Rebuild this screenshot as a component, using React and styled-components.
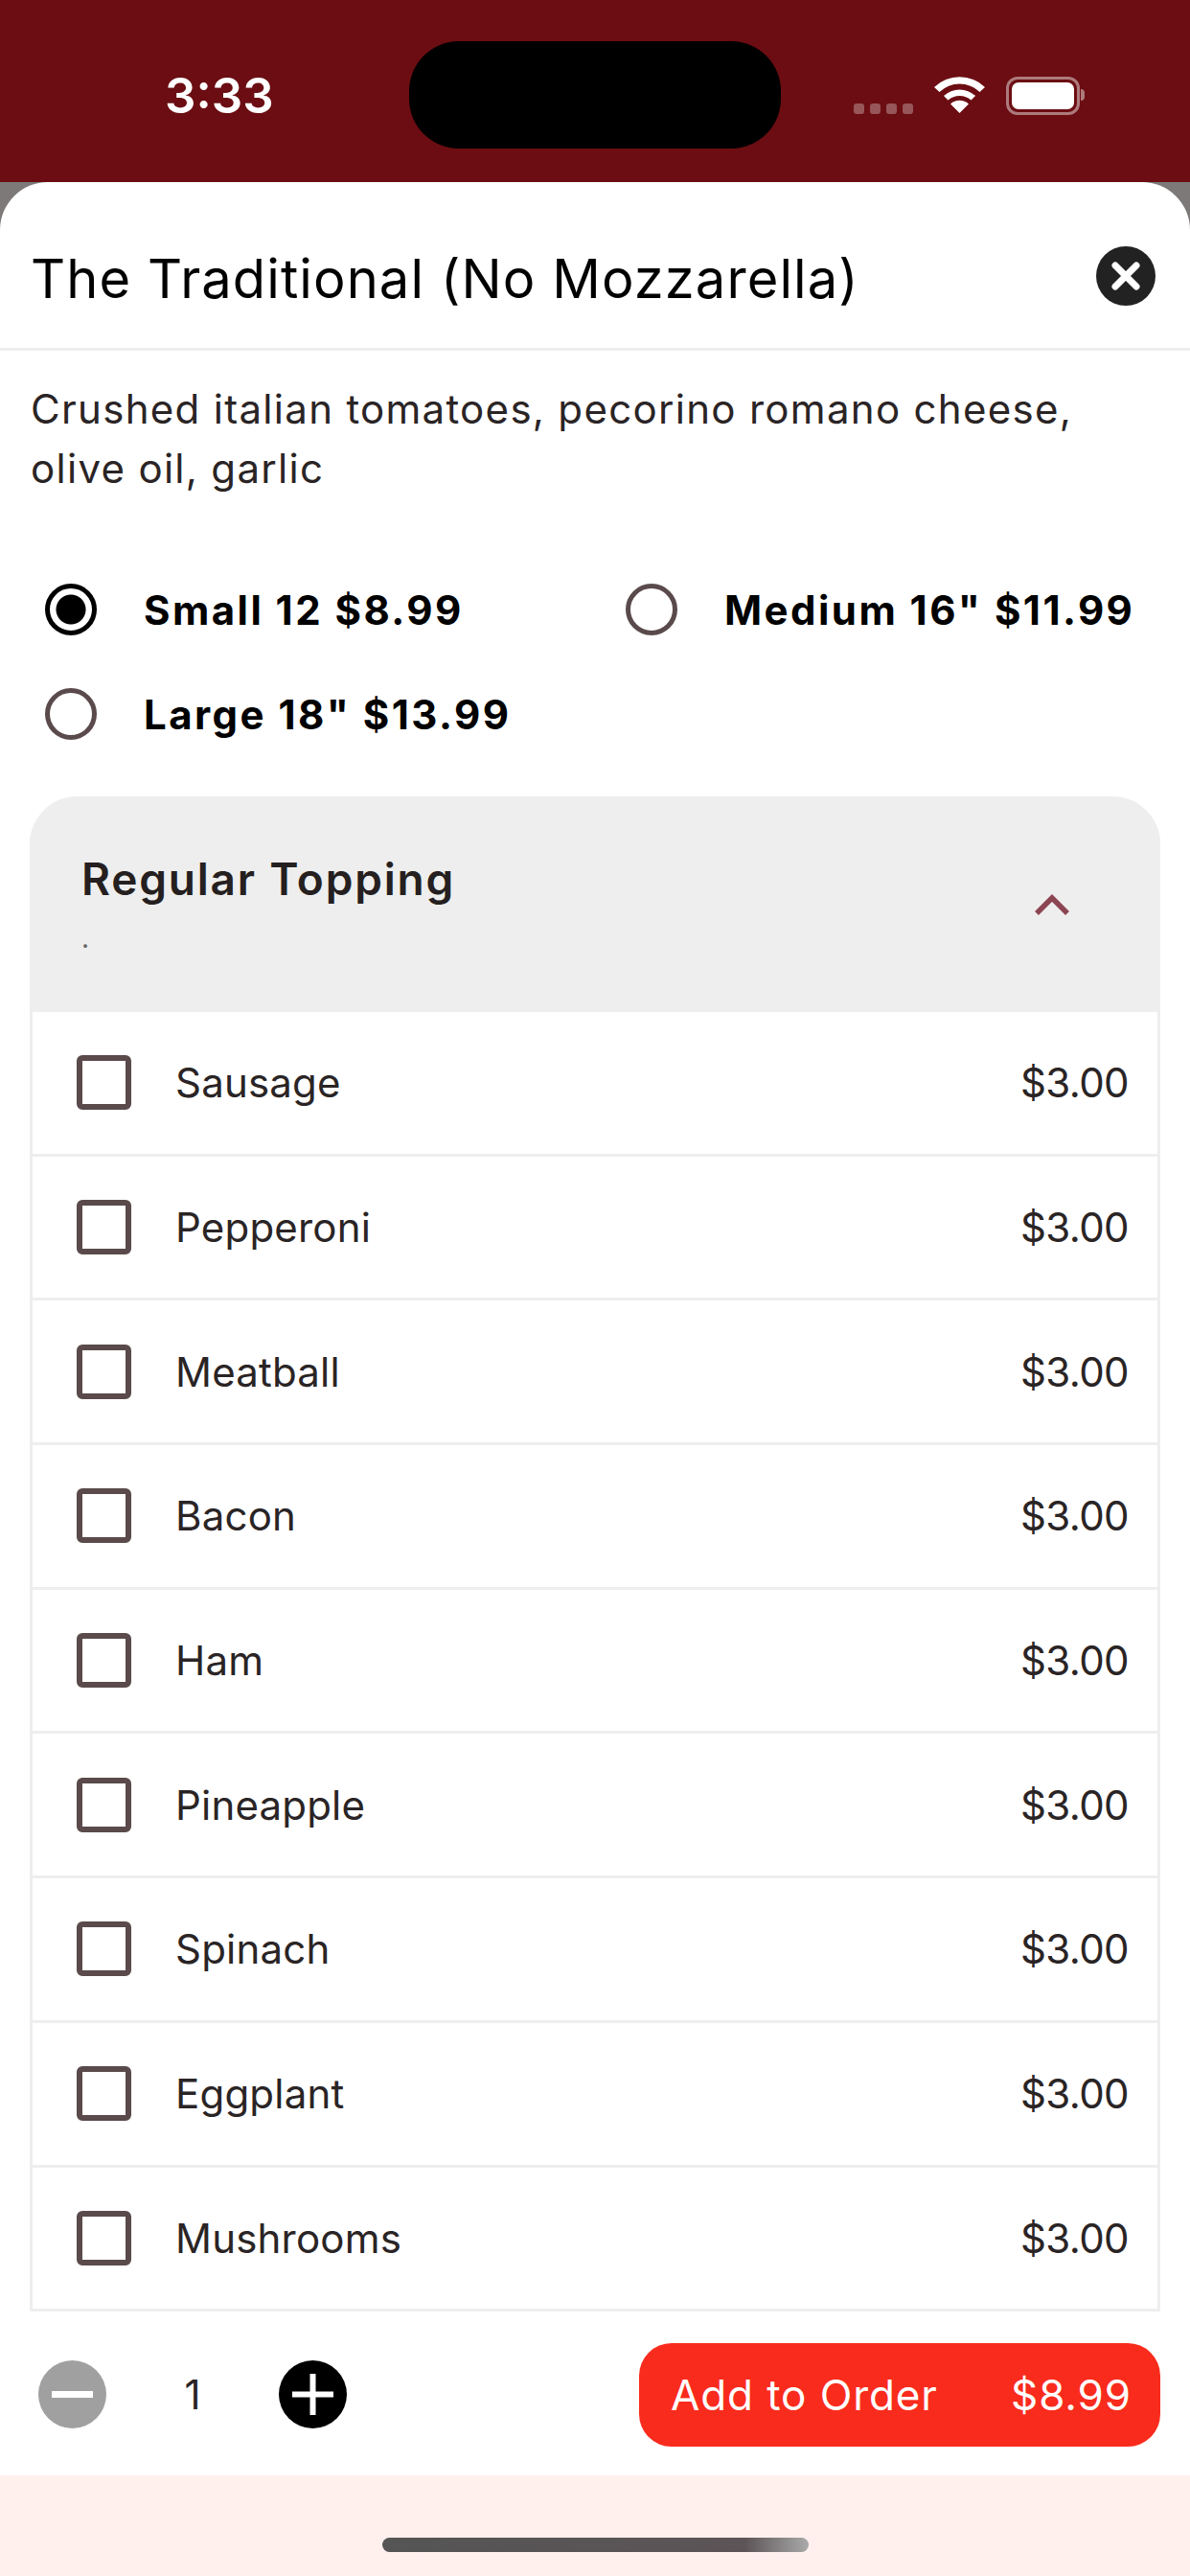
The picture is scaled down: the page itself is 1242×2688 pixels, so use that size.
import React from "react";
import styled, { createGlobalStyle } from "styled-components";

const toppings = ["Sausage", "Pepperoni", "Meatball", "Bacon", "Ham", "Pineapple", "Spinach", "Eggplant", "Mushrooms"];
const sizes = [
  { label: "Small 12 $8.99", checked: true },
  { label: 'Medium 16" $11.99' },
  { label: 'Large 18" $13.99' },
];

export default function App() {
  return (
    <Screen>
      <GlobalStyle />
      <StatusBar>
        <Time>3:33</Time>
        <Island />
        <StatusIcons>
          <SignalDots>
            <Dot />
            <Dot />
            <Dot />
            <Dot />
          </SignalDots>
          <svg width="53" height="38" viewBox="0 0 53 38">
            <path d="M26.500 38 L17 28.500 A14 14 0 0 1 36 28.500 Z" fill="#fff" />
            <path d="M10 20 A24 24 0 0 1 43 20 L38.500 24.500 A18 18 0 0 0 14.500 24.500 Z" fill="#fff" />
            <path d="M0 11 A38 38 0 0 1 53 11 L47.500 16 A30 30 0 0 0 5.500 16 Z" fill="#fff" />
          </svg>
          <Battery>
            <BatteryFill />
            <BatteryNub />
          </Battery>
        </StatusIcons>
      </StatusBar>
      <Backdrop>
        <Sheet>
          <Header>
            <Title>The Traditional (No Mozzarella)</Title>
            <svg width="62" height="62" viewBox="0 0 62 62">
              <circle cx="31" cy="31" r="31" fill="#222" />
              <path d="M20 20 L42 42 M42 20 L20 42" stroke="#fff" strokeWidth="7" strokeLinecap="round" />
            </svg>
          </Header>
          <Description>Crushed italian tomatoes, pecorino romano cheese, olive oil, garlic</Description>
          <SizeGrid>
            {sizes.map((size) => (
              <SizeOption key={size.label}>
                <Radio $checked={size.checked} />
                <SizeLabel>{size.label}</SizeLabel>
              </SizeOption>
            ))}
          </SizeGrid>
          <Panel>
            <PanelHead>
              <div>
                <PanelTitle>Regular Topping</PanelTitle>
                <PanelNote>.</PanelNote>
              </div>
              <svg width="36" height="22" viewBox="0 0 36 22">
                <path d="M2 20 L18 4 L34 20" fill="none" stroke="#8c4552" strokeWidth="5.500" />
              </svg>
            </PanelHead>
            {toppings.map((name) => (
              <Row key={name}>
                <Check />
                <RowName>{name}</RowName>
                <RowPrice>$3.00</RowPrice>
              </Row>
            ))}
          </Panel>
        </Sheet>
      </Backdrop>
      <Footer>
        <svg width="71" height="71" viewBox="0 0 71 71">
          <circle cx="35.500" cy="35.500" r="35.500" fill="#a0a0a0" />
          <path d="M14 35.500 H57" stroke="#fff" strokeWidth="7" />
        </svg>
        <Quantity>1</Quantity>
        <svg width="71" height="71" viewBox="0 0 71 71">
          <circle cx="35.500" cy="35.500" r="35.500" fill="#000" />
          <path d="M14 35.500 H57 M35.500 14 V57" stroke="#fff" strokeWidth="6" />
        </svg>
        <AddButton>
          <span>Add to Order</span>
          <span>$8.99</span>
        </AddButton>
      </Footer>
      <HomeArea>
        <HomeBar />
      </HomeArea>
    </Screen>
  );
}

const GlobalStyle = createGlobalStyle`
  html, body {
    margin: 0;
    background: #fff;
  }
  * {
    box-sizing: border-box;
  }
`;

const Screen = styled.div`
  width: 1242px;
  height: 2688px;
  display: flex;
  flex-direction: column;
  overflow: hidden;
  font-family: Inter, "Liberation Sans", sans-serif;
  color: #1f1a1b;
`;

const StatusBar = styled.div`
  height: 190px;
  flex: none;
  background: #6b0d12;
  display: flex;
  align-items: flex-start;
  padding-top: 43px;
  padding-left: 172px;
`;

const Time = styled.div`
  width: 255px;
  margin-top: 27px;
  font-size: 51px;
  line-height: 60px;
  font-weight: 600;
  color: #fff;
`;

const Island = styled.div`
  width: 388px;
  height: 112px;
  border-radius: 52px;
  background: #000;
`;

const StatusIcons = styled.div`
  margin-left: 76px;
  margin-top: 37px;
  display: flex;
  align-items: flex-start;
`;

const SignalDots = styled.div`
  display: flex;
  gap: 6px;
  margin-top: 28px;
  margin-right: 22px;
`;

const Dot = styled.div`
  width: 11px;
  height: 11px;
  border-radius: 3px;
  background: rgba(255, 255, 255, 0.3);
`;

const Battery = styled.div`
  position: relative;
  margin-left: 22px;
  width: 77px;
  height: 40px;
  border: 3px solid rgba(255, 255, 255, 0.45);
  border-radius: 12px;
  padding: 3px;
`;

const BatteryFill = styled.div`
  width: 100%;
  height: 100%;
  background: #fff;
  border-radius: 7px;
`;

const BatteryNub = styled.div`
  position: absolute;
  right: -8px;
  top: 10px;
  width: 4px;
  height: 12px;
  border-radius: 0 4px 4px 0;
  background: rgba(255, 255, 255, 0.45);
`;

const Backdrop = styled.div`
  flex: 1;
  min-height: 0;
  background: #7c7978;
`;

const Sheet = styled.div`
  height: 100%;
  background: #fff;
  border-radius: 50px 50px 0 0;
  overflow: hidden;
`;

const Header = styled.div`
  height: 176px;
  border-bottom: 3px solid #eeeeee;
  padding: 28px 36px 0 32px;
  display: flex;
  align-items: center;
  justify-content: space-between;
  & > svg {
    margin-top: -5px;
  }
`;

const Title = styled.div`
  font-size: 56px;
  line-height: 68px;
  font-weight: 400;
  color: #000;
  letter-spacing: 1.100px;
`;

const Description = styled.div`
  padding: 30px 32px 0;
  font-size: 42px;
  line-height: 62px;
  letter-spacing: 1.300px;
  color: #2a2425;
`;

const SizeGrid = styled.div`
  display: grid;
  grid-template-columns: 606px 1fr;
  grid-auto-rows: 109px;
  padding: 89px 0 0 47px;
`;

const SizeOption = styled.div`
  display: flex;
  align-items: center;
  height: 54px;
  gap: 49px;
`;

const Radio = styled.div`
  width: 54px;
  height: 54px;
  flex: none;
  border-radius: 50%;
  border: 5px solid ${(props) => (props.$checked ? "#000" : "#5a4a4c")};
  background: ${(props) => (props.$checked ? "radial-gradient(circle, #000 15px, #fff 16px)" : "#fff")};
`;

const SizeLabel = styled.div`
  font-size: 42px;
  font-weight: 700;
  letter-spacing: 2.450px;
  color: #000;
  white-space: nowrap;
`;

const Panel = styled.div`
  margin: 4px 31px 0;
  border-left: 3px solid #eeeeee;
  border-right: 3px solid #eeeeee;
  border-radius: 50px 50px 0 0;
`;

const PanelHead = styled.div`
  height: 225px;
  margin: 0 -3px;
  background: #eeeeee;
  border-radius: 50px 50px 0 0;
  padding: 52px 95px 0 54px;
  display: flex;
  justify-content: space-between;
  align-items: flex-start;
  & > svg {
    margin-top: 50px;
  }
`;

const PanelTitle = styled.div`
  font-size: 46px;
  line-height: 68px;
  font-weight: 600;
  letter-spacing: 1.800px;
  color: #251f20;
`;

const PanelNote = styled.div`
  font-size: 28px;
  line-height: 40px;
  margin-top: 8px;
  color: #666;
`;

const Row = styled.div`
  height: 150.700px;
  display: flex;
  align-items: center;
  padding: 0 30px 0 46px;
  border-bottom: 3px solid #eeeeee;
`;

const Check = styled.div`
  width: 57px;
  height: 57px;
  flex: none;
  border: 6px solid #5a4a4c;
  border-radius: 6px;
`;

const RowName = styled.div`
  flex: 1;
  margin-left: 46px;
  font-size: 42px;
  letter-spacing: 0.200px;
  color: #2a2425;
`;

const RowPrice = styled.div`
  font-size: 42px;
  letter-spacing: -0.600px;
  color: #2a2425;
`;

const Footer = styled.div`
  height: 169px;
  flex: none;
  background: #fff;
  display: flex;
  align-items: center;
  padding: 0 31px 0 40px;
`;

const Quantity = styled.div`
  width: 180px;
  text-align: center;
  font-size: 42px;
  color: #2a2425;
`;

const AddButton = styled.div`
  margin-left: auto;
  width: 544px;
  height: 108px;
  border-radius: 34px;
  background: #f92b1c;
  color: #fff;
  display: flex;
  align-items: center;
  justify-content: space-between;
  padding: 0 30px 0 33px;
  font-size: 44px;
  letter-spacing: 0.900px;
`;

const HomeArea = styled.div`
  height: 105px;
  flex: none;
  background: #fff0ee;
  padding-top: 65px;
  display: flex;
  justify-content: center;
  align-items: flex-start;
`;

const HomeBar = styled.div`
  width: 445px;
  height: 15px;
  border-radius: 8px;
  background: linear-gradient(90deg, #555 0%, #5c5456 85%, #aaa 100%);
`;
